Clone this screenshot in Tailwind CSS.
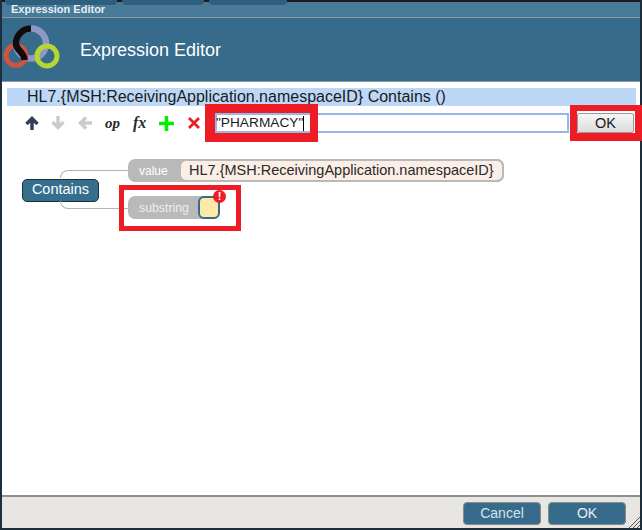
<!DOCTYPE html>
<html lang="en">
<head>
  <meta charset="UTF-8" />
  <title>Expression Editor</title>
  <script src="https://cdn.jsdelivr.net/npm/@tailwindcss/browser@4"></script>
</head>
<body class="w-[642px] h-[530px] overflow-hidden bg-white font-['Liberation_Sans',Arial,sans-serif] relative">

  <!-- Dialog -->
  <div class="w-[642px] h-[530px] flex flex-col border-x-2 border-b-2 border-[#1d2f3c] bg-white">

    <!-- Title bar -->
    <div class="h-[18px] shrink-0 bg-[#4a7a9a] border-b border-[#8a9aa5] flex flex-col">
      <div class="h-[5px] shrink-0 bg-[linear-gradient(#1c1c1c_0,#1c1c1c_2px,transparent_2px)] flex gap-[5px] pl-[3px]">
        <span class="w-[112px] h-[5px] rounded-b-[4px] bg-[#2f5f7e]"></span>
        <span class="w-[82px] h-[5px] rounded-b-[4px] bg-[#2f5f7e]"></span>
        <span class="w-[78px] h-[5px] rounded-b-[4px] bg-[#2f5f7e]"></span>
      </div>
      <span class="-mt-[2px] pl-[9px] text-[11px] font-bold text-[#e8eef2] leading-[12px]">Expression Editor</span>
    </div>

    <!-- Header -->
    <div class="h-[64px] shrink-0 bg-[#366b8c] border-b border-[#8a9aa5] flex items-center">
      <svg class="w-[78px] h-[64px] shrink-0" viewBox="0 0 78 64">
        <circle cx="29" cy="25.500" r="15" fill="none" stroke="#8f97c4" stroke-width="6.500"/>
        <circle cx="14" cy="37.500" r="10" fill="none" stroke="#cf5443" stroke-width="5"/>
        <path d="M29 10.500A15 15 0 0 0 14 25.500C14 33 22 33 22.500 42" fill="none" stroke="#0d0d0d" stroke-width="6.500"/>
        <circle cx="45" cy="38" r="10" fill="none" stroke="#b6d636" stroke-width="5"/>
      </svg>
      <span class="text-[18px] text-white leading-none">Expression Editor</span>
    </div>

    <!-- Body -->
    <div class="flex-1 relative">
      <div class="mt-[6px] ml-[5px] mr-[4px] h-[18px] bg-[#bdd7f7] pl-[20px] text-[16px] leading-[18px] text-[#1b1b1b]">HL7.{MSH:ReceivingApplication.namespaceID} Contains ()</div>

      <!-- Toolbar -->
      <div class="mt-[5px] h-[24px] flex items-center text-[#2a2a2a]">
        <svg class="ml-[23px] w-[14px] h-[14px] shrink-0" viewBox="0 0 14 14"><path d="M7 14V2.500M1.500 8L7 2.500 12.500 8" fill="none" stroke="#2e4058" stroke-width="3.500"/></svg>
        <svg class="ml-[12px] w-[14px] h-[14px] shrink-0" viewBox="0 0 14 14"><path d="M7 0v11.500M1.500 6L7 11.500 12.500 6" fill="none" stroke="#cbcbcb" stroke-width="3.500"/></svg>
        <svg class="ml-[13px] w-[14px] h-[14px] shrink-0" viewBox="0 0 14 14"><path d="M14 7H2.500M8 1.500L2.500 7 8 12.500" fill="none" stroke="#cbcbcb" stroke-width="3.500"/></svg>
        <span class="ml-[13px] w-[15px] font-['Liberation_Serif',serif] italic font-bold text-[15px] leading-none">op</span>
        <span class="ml-[13px] w-[14px] font-['Liberation_Serif',serif] italic font-bold text-[16px] leading-none">fx</span>
        <svg class="ml-[12px] w-[15px] h-[15px] shrink-0" viewBox="0 0 15 15"><path d="M7.500 0v15M0 7.500h15" stroke="#00f000" stroke-width="3.500"/></svg>
        <svg class="ml-[14px] w-[12px] h-[12px] shrink-0" viewBox="0 0 12 12"><path d="M1 1l10 10M11 1L1 11" stroke="#ee1c25" stroke-width="2.800"/></svg>
        <div class="ml-[15px] w-[354px] h-[20px] border-2 border-[#94b8e8] bg-white flex items-center text-[13.700px] text-[#1b1b1b]"><span class="-ml-px">"PHARMACY"</span><span class="w-px h-[15px] bg-black"></span></div>
        <button class="ml-[8px] w-[57px] h-[20px] border border-[#9a9a9a] rounded-[2px] bg-[linear-gradient(#f6f6f6,#dcdcdc)] text-[14.500px] text-[#1b1b1b] leading-none">OK</button>
      </div>

      <!-- Expression tree -->
      <div class="mt-[24px] ml-[19px] relative h-[62px] flex items-center">
        <div class="ml-px w-[77px] h-[23px] rounded-[5px] bg-[#366f8e] border border-[#1d2f3c] text-white text-[14.500px] flex items-center justify-center">Contains</div>
        <div class="absolute left-[39px] top-[11px] w-[68px] h-[8px] border-l border-t border-[#b5b5b5] rounded-tl-[8px]"></div>
        <div class="absolute left-[39px] top-[42px] w-[68px] h-[8px] border-l border-b border-[#b5b5b5] rounded-bl-[8px]"></div>
        <div class="absolute left-[107px] top-0 flex flex-col gap-[14px]">
          <div class="h-[23px] flex items-center bg-[#b9b9b9] rounded-[7px] pl-[11px]">
            <span class="pt-px text-[12px] text-white w-[40px]">value</span>
            <span class="h-[23px] flex items-center bg-[#fbeee6] border-2 border-[#b9b9b9] rounded-[7px] pl-[8px] pr-[8px] text-[14.500px] text-[#2a2a2a] whitespace-nowrap">HL7.{MSH:ReceivingApplication.namespaceID}</span>
          </div>
          <div class="h-[23px] w-fit flex items-center bg-[#b9b9b9] rounded-[7px] pl-[11px] relative">
            <span class="pt-px text-[12.300px] text-[#eeeeee] w-[59px]">substring</span>
            <span class="w-[22px] h-[23px] bg-[#fdeaa8] border-2 border-[#366b8c] rounded-[6px]"></span>
            <span class="absolute right-[-6px] top-[-6px] w-[13px] h-[13px] rounded-full bg-[#ee1c25] text-white text-[11px] font-bold leading-[13px] text-center">!</span>
          </div>
        </div>
      </div>
    </div>

    <!-- Footer -->
    <div class="h-[33px] shrink-0 bg-[#e7e6e2] border-t-2 border-[#8e8e8c] flex items-center justify-end gap-[7px] pr-[14px] pt-[1px] relative">
      <button class="w-[78px] h-[23px] rounded-[4px] bg-[#366b8c] border border-[#8a8a8a] text-[#d8e4ea] text-[14px] leading-none">Cancel</button>
      <button class="w-[78px] h-[23px] rounded-[4px] bg-[#366b8c] border border-[#8a8a8a] text-[#e8eef2] text-[14px] leading-none">OK</button>
      <svg class="absolute right-0 bottom-0 w-[11px] h-[11px]" viewBox="0 0 11 11"><path d="M0 11L11 0M4 11l7-7M8 11l3-3" stroke="#555" stroke-width="1"/></svg>
    </div>
  </div>

  <!-- Red annotation boxes over the screenshot -->
  <div class="absolute left-[205px] top-[104px] w-[113px] h-[38px] border-l-[10px] border-r-[8px] border-y-[9px] border-[#ee1c25]"></div>
  <div class="absolute left-[570px] top-[105px] w-[72px] h-[36px] border-x-[7px] border-t-[6px] border-b-[8px] border-[#ee1c25]"></div>
  <div class="absolute left-[119px] top-[185px] w-[122px] h-[46px] border-[5px] border-[#ee1c25]"></div>
</body>
</html>
